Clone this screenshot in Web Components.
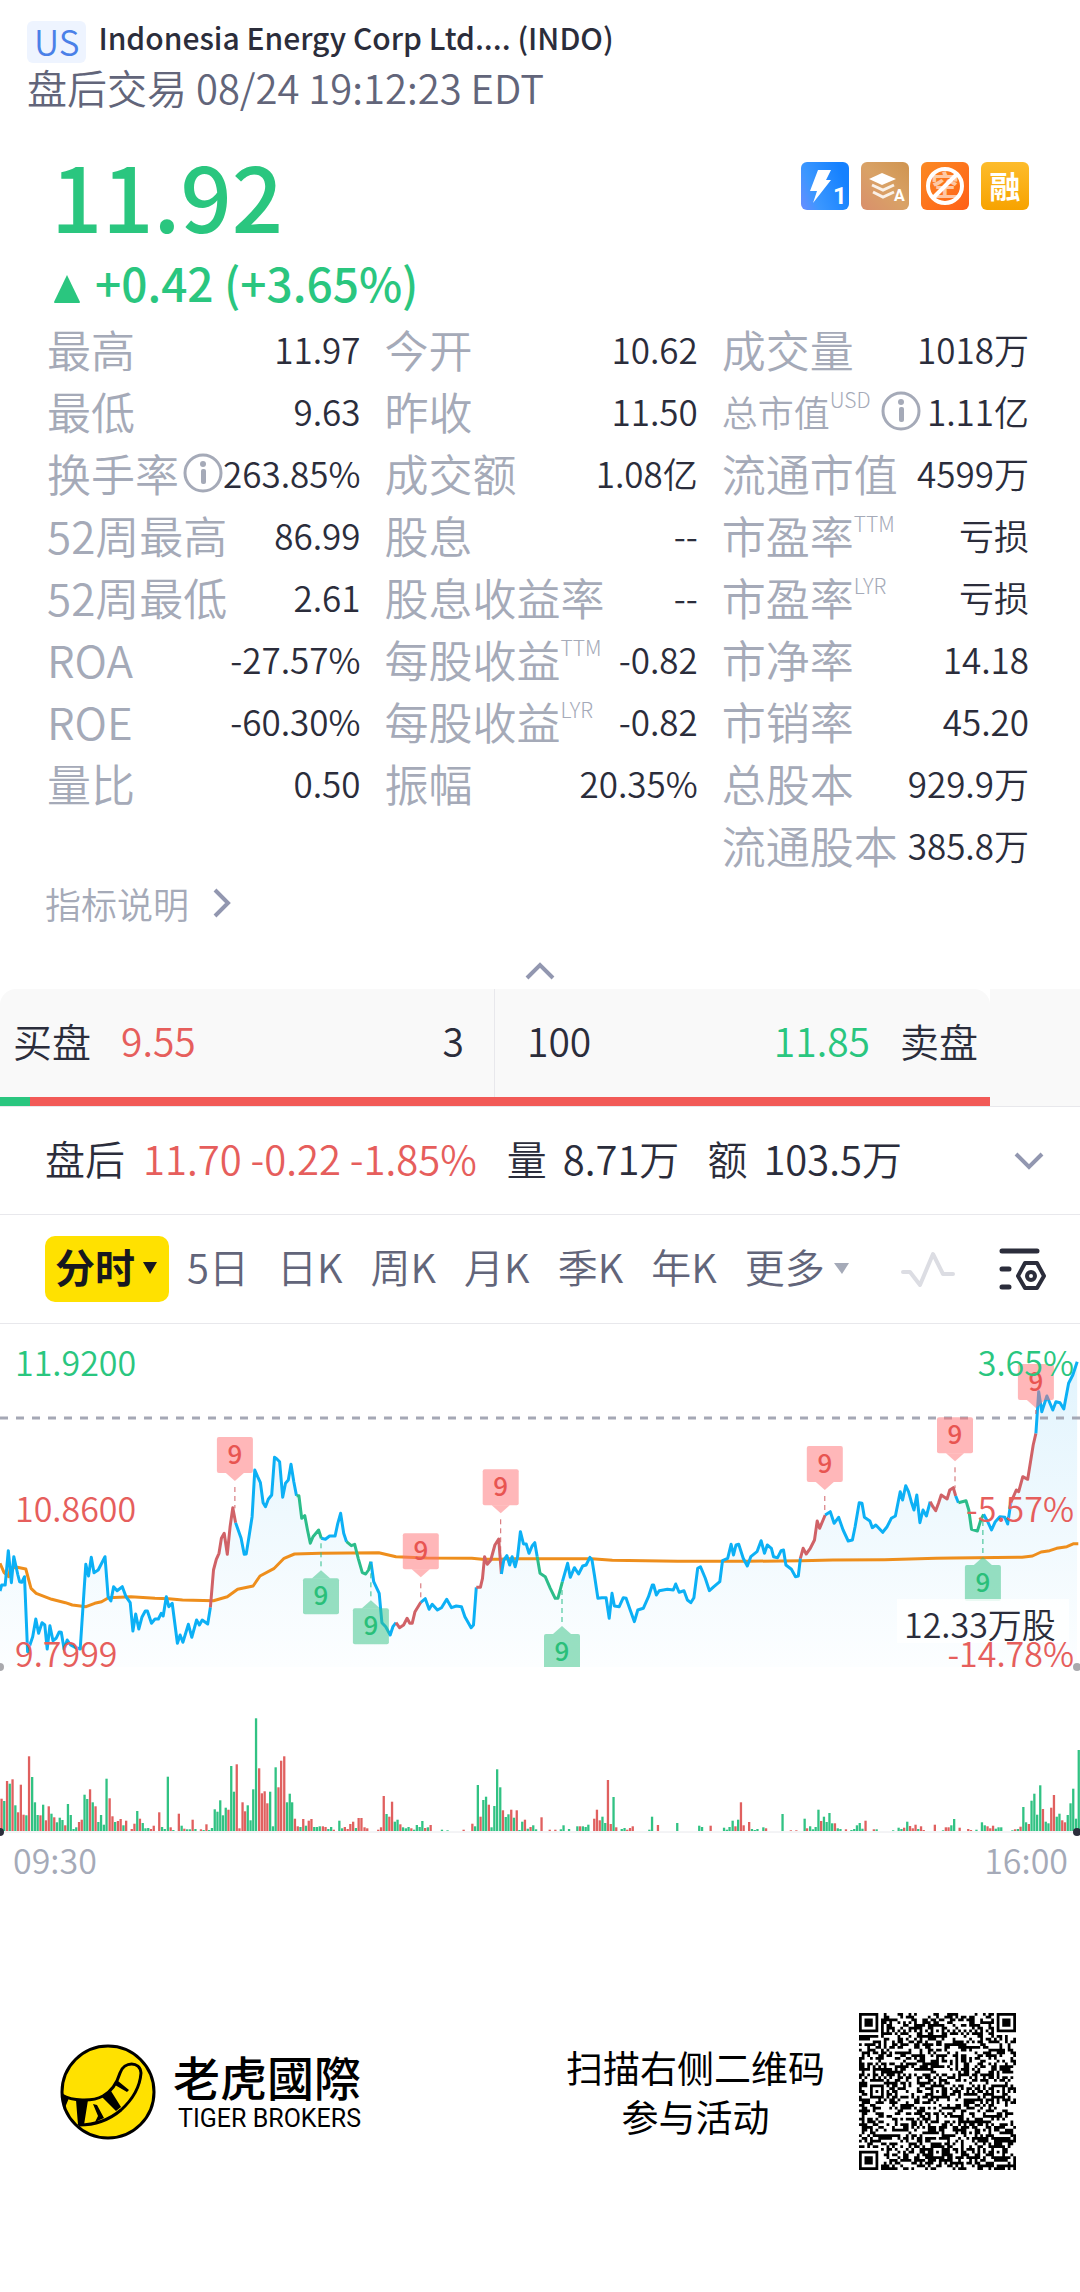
<!DOCTYPE html>
<html lang="zh-CN">
<head>
<meta charset="utf-8">
<meta name="viewport" content="width=device-width, initial-scale=1">
<title>Indonesia Energy Corp Ltd. (INDO)</title>
<style>
    :root {
        --up: #2ac67f;
        --down: #e65e5c;
        --ink: #2b2d3b;
        --muted: #a5aab8;
        --slate: #62657a;
        --line: #e8e8ec;
    }
    body {
        margin: 0;
        background: #fff;
        color: var(--ink);
        font-family: "Noto Sans CJK SC", "Noto Sans", sans-serif;
        font-size: 40px;
        font-weight: 350;
        line-height: 48px;
    }
</style>
</head>
<body>
<quote-header market="US">
    <span slot="name">Indonesia Energy Corp Ltd.... (INDO)</span>
    <span slot="time">盘后交易 08/24 19:12:23 EDT</span>
</quote-header>
<price-panel>
    <span slot="price">11.92</span>
    <span slot="change">+0.42 (+3.65%)</span>
</price-panel>
<stat-grid></stat-grid>
<order-book></order-book>
<after-hours></after-hours>
<chart-tabs></chart-tabs>
<intraday-chart></intraday-chart>
<brand-footer>
    <span slot="line1">扫描右侧二维码</span>
    <span slot="line2">参与活动</span>
</brand-footer>

<script>
class QuoteHeader extends HTMLElement {
    connectedCallback() {
        this.attachShadow({ mode: 'open' });
        this.shadowRoot.innerHTML = `
            <style>
                :host { display: block; padding: 21px 27px 0; }
                .top { display: flex; align-items: flex-start; gap: 12px; }
                .market {
                    box-sizing: border-box;
                    height: 42px;
                    padding: 0 7px;
                    border-radius: 6px;
                    background: #eef4ff;
                    color: #4a80e8;
                    font-size: 35px;
                    line-height: 40px;
                }
                h1 { margin: 0; font-size: 30px; font-weight: 500; line-height: 32px; }
                .time { margin: 0; color: var(--slate); }
            </style>
            <div class="top">
                <span class="market">${this.getAttribute('market')}</span>
                <h1><slot name="name"></slot></h1>
            </div>
            <p class="time"><slot name="time"></slot></p>
        `;
    }
}
customElements.define('quote-header', QuoteHeader);

class PricePanel extends HTMLElement {
    connectedCallback() {
        this.attachShadow({ mode: 'open' });
        this.shadowRoot.innerHTML = `
            <style>
                :host {
                    display: flex;
                    justify-content: space-between;
                    align-items: flex-start;
                    padding: 35px 51px 6px;
                    color: var(--up);
                    font-weight: 500;
                }
                .price { font-size: 90px; line-height: 96px; margin-bottom: 10px; }
                .change { display: flex; align-items: center; gap: 15px; font-size: 46px; line-height: 60px; }
                .arrow { width: 26px; height: 28px; margin-top: 14px; margin-left: 3px; }
                .tags { display: flex; gap: 12px; padding-top: 16px; }
                .tags svg { width: 48px; height: 48px; display: block; }
                text { font-weight: 700; fill: #fff; }
            </style>
            <div>
                <div class="price"><slot name="price"></slot></div>
                <div class="change">
                    <svg class="arrow" viewBox="0 0 26 28"><path d="M13 0L26 27Q26 28 25 28H1Q0 28 0 27Z" fill="#2ac67f"/></svg>
                    <slot name="change"></slot>
                </div>
            </div>
            <div class="tags">
                <svg viewBox="0 0 48 48">
                    <defs><linearGradient id="a" x1="0" y1="1" x2="1" y2="0.6"><stop offset="0" stop-color="#6b8cff"/><stop offset=".35" stop-color="#3b97ff"/><stop offset="1" stop-color="#1581ff"/></linearGradient></defs>
                    <rect width="48" height="48" rx="6" fill="url(#a)"/>
                    <path d="M17 8H30L25 18H30L12 41L16 29H9Z" fill="#fff"/>
                    <text x="32" y="42" font-size="24" font-family="Roboto, sans-serif">1</text>
                </svg>
                <svg viewBox="0 0 48 48">
                    <defs><linearGradient id="b" x1="0" y1="1" x2="1" y2="0"><stop offset="0" stop-color="#d98f6c"/><stop offset=".5" stop-color="#d9a266"/><stop offset="1" stop-color="#cf9450"/></linearGradient></defs>
                    <rect width="48" height="48" rx="6" fill="url(#b)"/>
                    <path d="M8 17L21 11L35 17L21 23Z" fill="#fff"/>
                    <path d="M11 23L22 28L33 23M12 30L22 35L33 30" fill="none" stroke="#fff" stroke-width="3" opacity=".85"/>
                    <text x="33" y="39" font-size="16" font-family="Roboto, sans-serif">A</text>
                </svg>
                <svg viewBox="0 0 48 48">
                    <defs><linearGradient id="c" x1="0" y1="0" x2="1" y2="1"><stop offset="0" stop-color="#fb8a23"/><stop offset="1" stop-color="#ff5f17"/></linearGradient></defs>
                    <rect width="48" height="48" rx="6" fill="url(#c)"/>
                    <text x="24" y="34" font-size="28" text-anchor="middle" opacity=".6">空</text>
                    <circle cx="24" cy="24" r="17" fill="none" stroke="#fff" stroke-width="4"/>
                    <path d="M12 36L36 12" stroke="#fff" stroke-width="4"/>
                </svg>
                <svg viewBox="0 0 48 48">
                    <defs><linearGradient id="d" x1="0" y1="0" x2="0" y2="1"><stop offset="0" stop-color="#fdbc2c"/><stop offset="1" stop-color="#f7a300"/></linearGradient></defs>
                    <rect width="48" height="48" rx="6" fill="url(#d)"/>
                    <text x="24" y="36" font-size="31" text-anchor="middle">融</text>
                </svg>
            </div>
        `;
    }
}
customElements.define('price-panel', PricePanel);

class StatItem extends HTMLElement {
    connectedCallback() {
        const sup = this.getAttribute('sup');
        const info = this.hasAttribute('info');
        this.attachShadow({ mode: 'open' });
        this.shadowRoot.innerHTML = `
            <style>
                :host { display: flex; justify-content: space-between; align-items: center; height: 62px; white-space: nowrap; }
                .label { display: flex; align-items: center; color: var(--muted); font-size: 44px; }
                :host([small]) .label { font-size: 36px; }
                sup { align-self: flex-start; font-size: 21px; line-height: 24px; font-weight: 300; }
                :host([small]) sup { margin-right: 6px; }
                button { display: block; padding: 0; border: 0; background: none; }
                button svg { display: block; width: 40px; height: 40px; margin-left: 4px; }
                .value { font-size: 35px; }
            </style>
            <span class="label"><slot name="label"></slot>${sup ? `<sup>${sup}</sup>` : ''}${info ? `
                <button aria-label="说明"><svg viewBox="0 0 40 40">
                    <circle cx="20" cy="20" r="18" fill="none" stroke="#a5aab8" stroke-width="3"/>
                    <circle cx="20" cy="11" r="3" fill="#a5aab8"/>
                    <rect x="18" y="16" width="5" height="15" rx="2" fill="#a5aab8"/>
                </svg></button>` : ''}</span>
            <span class="value"><slot></slot></span>
        `;
    }
}
customElements.define('stat-item', StatItem);

class StatGrid extends HTMLElement {
    connectedCallback() {
        // label, value, superscript, extra attributes
        const columns = [
            [['最高', '11.97'], ['最低', '9.63'], ['换手率', '263.85%', '', 'info'], ['52周最高', '86.99'],
             ['52周最低', '2.61'], ['ROA', '-27.57%'], ['ROE', '-60.30%'], ['量比', '0.50']],
            [['今开', '10.62'], ['昨收', '11.50'], ['成交额', '1.08亿'], ['股息', '--'],
             ['股息收益率', '--'], ['每股收益', '-0.82', 'TTM'], ['每股收益', '-0.82', 'LYR'], ['振幅', '20.35%']],
            [['成交量', '1018万'], ['总市值', '1.11亿', 'USD', 'info small'], ['流通市值', '4599万'], ['市盈率', '亏损', 'TTM'],
             ['市盈率', '亏损', 'LYR'], ['市净率', '14.18'], ['市销率', '45.20'], ['总股本', '929.9万'], ['流通股本', '385.8万']],
        ];
        const item = ([label, value, sup = '', extra = '']) =>
            `<stat-item sup="${sup}" ${extra}><span slot="label">${label}</span>${value}</stat-item>`;
        this.attachShadow({ mode: 'open' });
        this.shadowRoot.innerHTML = `
            <style>
                :host { display: block; }
                .grid { display: grid; grid-template-columns: 313fr 313fr 307fr; gap: 24px; padding: 0 51px 0 47px; }
                a {
                    display: flex;
                    align-items: center;
                    gap: 24px;
                    width: max-content;
                    height: 54px;
                    margin: 0 0 23px 45px;
                    color: var(--muted);
                    font-size: 36px;
                    text-decoration: none;
                }
                a svg { width: 18px; height: 30px; }
                .fold { display: block; height: 36px; margin: 0 auto; padding: 0; border: 0; background: none; }
                .fold svg { display: block; width: 30px; height: 18px; }
                path { fill: none; stroke: #9297b0; stroke-width: 4; }
            </style>
            <div class="grid">${columns.map(col => `<div>${col.map(item).join('')}</div>`).join('')}</div>
            <a href="#help">指标说明<svg viewBox="0 0 18 30"><path d="M2 2L15 15L2 28"/></svg></a>
            <button class="fold" aria-label="收起"><svg viewBox="0 0 30 18"><path d="M2 16L15 3L28 16"/></svg></button>
        `;
    }
}
customElements.define('stat-grid', StatGrid);

class OrderBook extends HTMLElement {
    connectedCallback() {
        this.attachShadow({ mode: 'open' });
        this.shadowRoot.innerHTML = `
            <style>
                :host { display: flex; border-bottom: 1px solid var(--line); background: #fff; font-size: 39px; }
                .book { flex: 11; }
                .rest { flex: 1; background: #f9f9f9; }
                .sides { display: flex; height: 108px; border-radius: 16px 16px 0 0; background: #f9f9f9; }
                .side { flex: 1; display: flex; align-items: center; gap: 30px; }
                .buy { padding: 0 30px 6px 13px; border-right: 1px solid var(--line); }
                .sell { padding: 0 12px 6px 32px; }
                .push { margin-left: auto; }
                .bid { color: var(--down); }
                .ask { color: var(--up); }
                .ratio { display: flex; height: 9px; background: #f25a57; }
                .ratio i { width: 3%; background: var(--up); }
            </style>
            <div class="book">
                <div class="sides">
                    <div class="side buy"><span>买盘</span><span class="bid">9.55</span><span class="push">3</span></div>
                    <div class="side sell"><span>100</span><span class="ask push">11.85</span><span>卖盘</span></div>
                </div>
                <div class="ratio"><i></i></div>
            </div>
            <div class="rest"></div>
        `;
    }
}
customElements.define('order-book', OrderBook);

class AfterHours extends HTMLElement {
    connectedCallback() {
        this.attachShadow({ mode: 'open' });
        this.shadowRoot.innerHTML = `
            <style>
                :host {
                    box-sizing: border-box;
                    display: flex;
                    align-items: center;
                    height: 108px;
                    padding: 0 36px 6px 45px;
                    border-bottom: 1px solid var(--line);
                    white-space: nowrap;
                }
                .change { margin: 0 30px 0 18px; color: var(--down); }
                .amount { display: flex; gap: 16px; margin-right: 28px; }
                button { margin-left: auto; padding: 6px 0 0; border: 0; background: none; }
                svg { display: block; width: 30px; height: 18px; }
            </style>
            <span>盘后</span>
            <span class="change">11.70 -0.22 -1.85%</span>
            <span class="amount"><span>量</span><span>8.71万</span></span>
            <span class="amount"><span>额</span><span>103.5万</span></span>
            <button aria-label="展开"><svg viewBox="0 0 30 18"><path d="M2 2L15 15L28 2" fill="none" stroke="#9297b0" stroke-width="4"/></svg></button>
        `;
    }
}
customElements.define('after-hours', AfterHours);

class ChartTabs extends HTMLElement {
    connectedCallback() {
        const tabs = ['5日', '日K', '周K', '月K', '季K', '年K'];
        this.attachShadow({ mode: 'open' });
        this.shadowRoot.innerHTML = `
            <style>
                :host {
                    display: flex;
                    align-items: center;
                    height: 108px;
                    padding: 0 33px 0 45px;
                    border-bottom: 1px solid var(--line);
                }
                button {
                    display: flex;
                    align-items: center;
                    padding: 0;
                    border: 0;
                    background: none;
                    color: var(--slate);
                    font: inherit;
                    white-space: nowrap;
                }
                nav { display: flex; gap: 28px; margin-left: 18px; padding-bottom: 6px; }
                .active {
                    box-sizing: border-box;
                    gap: 7px;
                    height: 66px;
                    padding: 0 11px 6px 10px;
                    border-radius: 10px;
                    background: #ffe100;
                    color: #17181f;
                    font-weight: 700;
                }
                .active svg, .more svg { width: 16px; height: 12px; padding-top: 4px; }
                .more { gap: 9px; }
                .pulse { margin-left: auto; }
                .pulse svg { width: 54px; height: 40px; }
                .setup { margin-left: 44px; }
                .setup svg { width: 48px; height: 44px; }
            </style>
            <button class="active">分时<svg viewBox="0 0 16 12"><path d="M1 0H15L8 12Z" fill="#17181f"/></svg></button>
            <nav>
                ${tabs.map(t => `<button>${t}</button>`).join('')}
                <button class="more">更多<svg viewBox="0 0 16 12"><path d="M0 1H15L8 12Z" fill="#a5aab8"/></svg></button>
            </nav>
            <button class="pulse" aria-label="走势"><svg viewBox="0 0 54 40">
                <path d="M2 23H9L19 36L32 5L42 25H52" fill="none" stroke="#dcdde3" stroke-width="4" stroke-linejoin="round" stroke-linecap="round"/>
            </svg></button>
            <button class="setup" aria-label="设置"><svg viewBox="0 0 48 44" fill="none" stroke="#2b2d3b" stroke-width="5" stroke-linecap="round">
                <path d="M3 4H38M3 22H10M3 40H10"/>
                <path d="M26 16H38L45 29L38 41H26L19 29Z" stroke-width="4" stroke-linejoin="round"/>
                <circle cx="32" cy="29" r="4" stroke-width="4"/>
            </svg></button>
        `;
    }
}
customElements.define('chart-tabs', ChartTabs);

// Each half of the session is plotted on a grid 1568 units wide, three units per pixel high.
const HALF = 1568;
const px = x => (x * 540 / HALF).toFixed(1);
const py = y => (y / 3 + 6).toFixed(1);
const shift = s => s.split(' ').map(p => {
    const [x, y] = p.split(',');
    return (+x + HALF) + ',' + y;
}).join(' ');
const toPoints = s => s.split(' ').map(p => {
    const [x, y] = p.split(',');
    return px(+x) + ',' + py(+y);
});

const PRICE = [
    ['blue', '0,783 5,765 15,765 24,662 33,758 40,680 52,735 57,755 63,757 71,740 80,965 95,920 104,867 112,910 122,878 130,885 137,957 145,887 154,932 163,925 172,906 178,907 186,958 195,930 205,945 218,952 233,957 249,703 257,738 265,682 273,728 285,720 305,680 314,800 322,813 330,770 340,782 355,770 366,800 378,818 386,903 394,852 403,897 412,862 422,843 428,843 440,880 450,867 460,867 468,850 474,858 483,800 490,830 500,820 515,940 523,915 531,937 547,883 557,922 571,870 579,885 587,870 603,882 611,832'],
    ['red', '620,720 628,688 636,670 643,625 651,610 660,673 668,590 676,533 684,578'],
    ['blue', '700,625 709,673 715,672 723,620 732,560 740,420 748,440 756,458 764,518 771,530 779,508 789,495 797,382 804,387 812,395 821,502 829,460 837,450 845,403 853,455 861,497'],
    ['green', '868,497 876,565 885,557 893,600 901,640 909,620 925,600 933,625'],
    ['blue', '945,628 957,618 973,618 981,580 989,550 998,610 1006,635'],
    ['green', '1020,647 1030,643 1040,685 1052,728 1062,732 1070,720 1077,695'],
    ['blue', '1085,755 1101,790 1109,878 1120,890 1133,915 1141,890 1150,878'],
    ['red', '1160,893 1172,885 1182,865 1190,880 1197,880 1205,845 1222,817'],
    ['blue', '1235,806 1246,838 1255,823 1270,840 1282,833 1297,808 1311,833 1325,828 1340,830 1350,860 1368,893 1375,885 1383,772'],
    ['red', '1395,772 1401,745 1407,680 1415,703 1425,690 1437,645 1448,627 1456,732'],
    ['blue', '1463,690 1472,677 1480,705 1487,680 1496,710 1503,680 1511,605 1520,642 1528,642 1536,670 1545,648 1553,638 1560,680'],
    ['green', shift('0,730 15,740 30,775 44,805 52,805 65,755')],
    ['blue', shift('80,700 88,742 100,713 112,732 124,708 134,705 145,682 151,690 158,735 168,805 180,803 192,803 201,865 209,790 216,828 230,830 242,803 250,805 262,840 274,875 284,840 300,835 315,800 326,765 330,765 338,795 346,782 370,778 387,780 394,762 404,787 418,782 428,810 438,818 447,803 458,715 466,710 480,745 492,782 505,770 522,755 530,692 545,685 555,643 562,675 569,645 577,643 590,685 602,708 612,680 630,665 642,632 652,670 660,645 672,655 678,680 690,683 700,662 707,660 714,705 730,718 742,740 750,738 756,685')],
    ['red', shift('764,655 773,672 785,655 797,630 805,573 812,595 828,555')],
    ['blue', shift('843,545 854,580 867,562 880,600 895,633 907,630 915,590 927,518 935,520 942,562 958,573 965,593 975,585 995,607 1008,590 1020,565 1032,558 1046,485 1053,510 1062,467 1070,485 1078,515 1086,540 1094,495 1103,578 1112,540 1122,558 1133,515')],
    ['red', shift('1141,530 1149,542 1157,520 1165,495 1182,507 1190,480 1200,473 1207,498')],
    ['blue', shift('1215,518')],
    ['green', shift('1237,512 1245,540 1253,598 1270,603 1280,570 1288,553')],
    ['blue', shift('1300,575 1311,600 1322,575 1335,560 1350,562 1358,582 1367,518')],
    ['red', shift('1383,480 1390,485 1402,440 1416,448 1425,390 1432,345 1440,310')],
    ['blue', shift('1448,185 1457,245 1472,198 1489,240 1498,215 1510,218 1521,237 1535,160 1547,135 1560,95')],
];
const AVERAGE = '0,700 12,728 25,740 30,715 50,712 75,717 90,775 105,790 150,808 190,818 210,825 250,830 275,820 295,815 315,803 380,800 450,805 490,806 530,810 620,812 660,800 690,778 735,768 755,738 795,716 825,685 855,672 930,670 1100,668 1150,680 1240,684 1370,685 1400,688 1450,688 1480,686 '
    + shift('0,686 150,686 210,691 400,694 600,694 760,692 850,690 1000,689 1150,685 1200,684 1400,682 1430,678 1455,666 1480,662 1500,655 1530,650 1550,641 1563,641');

// centre, top of the box, y of the price that it points at
const SELL_MARKS = [[682, 321, 535], [1222, 610, 815], [1454, 418, 680], [HALF + 827, 348, 550], [HALF + 1205, 262, 475], [HALF + 1440, 102, 240]];
const BUY_MARKS = [[932, 745, 625], [1077, 835, 700], [HALF + 64, 912, 755], [HALF + 1286, 705, 555]];

// x,height pairs; a negative height is a falling minute
const VOLUME = '4,-97 12,90 20,-150 28,142 36,-155 44,77 52,-56 60,-139 68,-49 76,47 84,-224 93,162 101,86 109,48 117,-47 125,79 133,-32 141,-74 149,52 157,-41 165,26 173,40 181,33 189,-17 197,81 205,48 213,6 221,11 229,-27 237,-34 245,109 253,96 261,-125 269,86 277,-74 285,27 293,48 301,19 309,157 318,-98 326,-44 334,27 342,-30 350,-36 358,17 366,-31 382,-6 390,-22 398,60 406,-37 414,24 422,8 430,9 438,-6 446,-16 462,-56 470,12 478,6 487,163 495,-11 503,3 519,-52 527,16 535,-7 543,5 551,5 559,-34 567,6 583,-5 591,3 599,-20 607,3 615,9 623,65 631,58 639,92 647,47 655,70 663,-64 671,195 679,118 687,-200 695,-8 704,-86 711,-59 719,77 727,32 735,125 743,338 752,-188 760,-113 768,-119 776,-83 784,118 792,14 800,191 808,-131 816,-211 825,-224 833,86 841,112 848,86 856,-37 864,-14 872,12 880,-36 888,16 896,-31 904,-36 912,12 920,12 928,14 937,-14 945,-12 953,6 961,12 969,-4 985,31 993,8 1001,-12 1009,-6 1017,-21 1025,-28 1033,9 1041,-39 1049,-39 1058,-11 1066,-8 1098,-4 1106,-11 1114,-105 1122,51 1130,-43 1138,-88 1146,28 1154,34 1162,-20 1170,11 1178,8 1186,12 1194,-8 1202,4 1210,18 1218,12 1226,30 1234,-9 1242,11 1250,-18 1283,4 1299,2 1346,-4 1371,-22 1379,14 1387,138 1395,-43 1403,93 1411,103 1419,-79 1427,11 1435,75 1443,185 1452,131 1460,-62 1468,42 1476,50 1484,-64 1492,40 1500,-62 1508,3 1516,28 1524,-34 1532,7 1540,-12 1548,17 1556,5 '
    + shift('4,-41 28,-4 44,-4 60,5 68,17 84,6 108,14 116,-14 124,14 132,12 140,19 157,-37 165,-64 173,-32 181,43 189,24 197,-153 205,-21 213,102 221,-11 237,6 245,9 253,-4 261,-9 269,-14 317,4 325,43 342,-18 398,24 462,16 470,12 495,-16 534,10 542,4 550,12 559,31 567,-14 575,34 583,-86 591,-17 607,-27 615,6 623,3 631,6 648,11 656,-8 704,51 728,-2 744,-2 768,37 775,-8 784,14 792,5 800,12 808,64 816,-30 824,43 832,27 840,54 848,23 856,-23 864,8 872,6 888,-5 904,3 912,6 920,17 928,24 936,7 945,-31 969,-5 977,5 1025,2 1041,10 1049,6 1057,-10 1066,28 1074,-15 1082,-8 1090,-19 1098,6 1106,-14 1114,-3 1146,-19 1170,2 1178,-11 1186,-11 1194,17 1202,36 1218,-10 1243,-6 1251,-3 1267,4 1283,26 1291,17 1299,-14 1307,-8 1315,-16 1323,7 1331,11 1339,11 1371,2 1379,-5 1387,6 1395,-13 1403,72 1411,26 1419,-21 1427,91 1435,112 1443,49 1452,137 1460,-66 1468,28 1476,23 1484,-70 1492,-108 1500,43 1508,52 1516,-32 1524,-26 1532,48 1540,83 1548,127 1556,37 1564,243');

class IntradayChart extends HTMLElement {
    priceLines() {
        let last = null;
        return PRICE.map(([color, s]) => {
            const pts = toPoints(s);
            if (last) pts.unshift(last);
            last = pts[pts.length - 1];
            return `<polyline class="${color}" points="${pts.join(' ')}"/>`;
        }).join('');
    }
    mark([x, top, y], kind) {
        const cx = +px(x), t = +py(top), to = +py(y);
        const sell = kind === 'sell';
        const tip = sell
            ? `M${cx - 9} ${t + 36}L${cx} ${t + 44}L${cx + 9} ${t + 36}Z`
            : `M${cx - 9} ${t}L${cx} ${t - 8}L${cx + 9} ${t}Z`;
        const bottom = sell ? t + 50 : t - 12;
        return `<g class="${kind}">
            <path class="leader" d="M${cx} ${bottom}V${to}"/>
            <rect x="${cx - 18}" y="${t}" width="36" height="36" rx="2"/><path d="${tip}"/>
            <text x="${cx}" y="${t + 27}" text-anchor="middle">9</text>
        </g>`;
    }
    bars() {
        return VOLUME.split(' ').map(p => {
            const [x, h] = p.split(',').map(Number);
            const size = Math.abs(h) / 3;
            return `<rect x="${(px(x) - 1).toFixed(1)}" y="${(507 - size).toFixed(1)}" width="2.3" height="${size.toFixed(1)}" fill="${h < 0 ? '#e0605f' : '#31c283'}"/>`;
        }).join('');
    }
    connectedCallback() {
        const all = PRICE.map(([, s]) => toPoints(s).join(' ')).join(' ');
        this.attachShadow({ mode: 'open' });
        this.shadowRoot.innerHTML = `
            <style>
                :host { display: block; }
                svg { display: block; width: 100%; height: auto; }
                polyline { fill: none; stroke-width: 3; stroke-linejoin: round; }
                .blue { stroke: #0cb0f5; }
                .red { stroke: #d06267; }
                .green { stroke: #2cbd8a; }
                .avg { stroke: #ee8e1c; }
                .leader { fill: none; stroke-width: 1; stroke-dasharray: 5 4; }
                .sell rect, .sell path:not(.leader) { fill: #ff7073; fill-opacity: .5; }
                .buy rect, .buy path:not(.leader) { fill: #33c283; fill-opacity: .5; }
                .sell .leader { stroke: #d06267; }
                .buy .leader { stroke: #2cbd8a; }
                .sell text { fill: #e85551; }
                .buy text { fill: #2abf79; }
                g text { font-size: 26px; font-weight: 500; }
                .axis { font-size: 34px; }
                .up { fill: var(--up); }
                .down { fill: var(--down); }
                .time { fill: var(--muted); }
                .vol { fill: var(--ink); font-size: 34px; }
            </style>
            <svg viewBox="0 0 1080 560" role="img" aria-label="分时走势">
                <defs>
                    <linearGradient id="fill" x1="0" y1="0" x2="0" y2="1">
                        <stop offset="0" stop-color="#e2f4fd"/>
                        <stop offset="1" stop-color="#fcfeff"/>
                    </linearGradient>
                    <clipPath id="plot"><rect width="1080" height="343"/></clipPath>
                </defs>
                <polygon points="0,343 ${all} 1077,343" fill="url(#fill)"/>
                <path d="M0 94H1080" stroke="#a5a8b5" stroke-width="3" stroke-dasharray="8 8"/>
                <polyline class="avg" points="${toPoints(AVERAGE).join(' ')}"/>
                ${this.priceLines()}
                <g clip-path="url(#plot)">
                    ${SELL_MARKS.map(m => this.mark(m, 'sell')).join('')}
                    ${BUY_MARKS.map(m => this.mark(m, 'buy')).join('')}
                </g>
                <rect x="897" y="275" width="172" height="44" fill="#fff" opacity=".8"/>
                <text class="vol" x="904" y="314">12.33万股</text>
                <text class="axis up" x="15" y="52">11.9200</text>
                <text class="axis down" x="15" y="198">10.8600</text>
                <text class="axis down" x="15" y="343">9.7999</text>
                <text class="axis up" x="1074" y="52" text-anchor="end">3.65%</text>
                <text class="axis down" x="1074" y="198" text-anchor="end">-5.57%</text>
                <text class="axis down" x="1074" y="343" text-anchor="end">-14.78%</text>
                <circle cx="0" cy="343" r="4" fill="#a9a9ad"/>
                <circle cx="1077" cy="343" r="4" fill="#a9a9ad"/>
                <path d="M0 508H1080" stroke="#e8e8ec"/>
                ${this.bars()}
                <circle cx="0" cy="508" r="4" fill="#2b2d3b"/>
                <circle cx="1077" cy="508" r="4" fill="#2b2d3b"/>
                <text class="axis time" x="13" y="550">09:30</text>
                <text class="axis time" x="1068" y="550" text-anchor="end">16:00</text>
            </svg>
        `;
    }
}
customElements.define('intraday-chart', IntradayChart);

class QrCode extends HTMLElement {
    connectedCallback() {
        const n = 57;
        const grid = [];
        let seed = 20230824;
        for (let y = 0; y < n; y++) {
            grid.push([]);
            for (let x = 0; x < n; x++) {
                seed = (seed * 48271) % 2147483647;
                grid[y].push(seed / 2147483647 > 0.5);
            }
        }
        for (let i = 8; i < n - 8; i++) grid[6][i] = grid[i][6] = i % 2 === 0;
        const square = (cx, cy, r, dark) => {
            for (let y = -r; y <= r; y++) {
                for (let x = -r; x <= r; x++) {
                    if (cx + x < 0 || cy + y < 0 || cx + x >= n || cy + y >= n) continue;
                    grid[cy + y][cx + x] = dark(Math.max(Math.abs(x), Math.abs(y)));
                }
            }
        };
        [[3, 3], [n - 4, 3], [3, n - 4]].forEach(([x, y]) => square(x, y, 4, d => d < 2 || d === 3));
        [[28, 6], [6, 28], [28, 28], [50, 28], [28, 50], [50, 50]].forEach(([x, y]) => square(x, y, 2, d => d !== 1));
        let d = '';
        grid.forEach((row, y) => row.forEach((on, x) => { if (on) d += `M${x} ${y}h1v1h-1z`; }));
        this.attachShadow({ mode: 'open' });
        this.shadowRoot.innerHTML = `
            <style>
                :host { display: block; }
                svg { display: block; width: 157px; height: 157px; }
            </style>
            <svg viewBox="0 0 ${n} ${n}" role="img" aria-label="二维码"><path d="${d}"/></svg>
        `;
    }
}
customElements.define('qr-code', QrCode);

class BrandFooter extends HTMLElement {
    connectedCallback() {
        this.attachShadow({ mode: 'open' });
        this.shadowRoot.innerHTML = `
            <style>
                :host {
                    display: flex;
                    align-items: center;
                    justify-content: space-between;
                    padding: 129px 64px 120px 60px;
                    color: #000;
                    font-weight: 400;
                }
                .brand, .scan { display: flex; align-items: center; }
                .brand { gap: 17px; }
                .brand svg { width: 96px; height: 96px; }
                .names { display: flex; flex-direction: column; align-items: flex-end; gap: 3px; }
                .zh { font-size: 47px; font-weight: 500; line-height: 52px; }
                .en { font-family: Roboto, sans-serif; font-size: 25px; line-height: 28px; }
                .scan { gap: 34px; }
                .text { font-size: 37px; text-align: center; }
                .text div { line-height: 49px; }
            </style>
            <div class="brand">
                <svg viewBox="0 0 96 96">
                    <circle cx="48" cy="48" r="46" fill="#ffe100" stroke="#000" stroke-width="3"/>
                    <path d="M2 51C12 57 32 58 43 52C52 47 57 39 60 29C64 17 80 17 81 29C80 43 72 56 61 66C48 77 34 81 19 81" fill="none" stroke="#000" stroke-width="3"/>
                    <path d="M1 50L9 54L4 66ZM16 56H28L24 81H18ZM33 60L37 61L44 74L35 78L38 72ZM42 53L51 47L61 63L56 67ZM55 41L58 37L69 46L67 48Z"/>
                </svg>
                <div class="names"><span class="zh">老虎國際</span><span class="en">TIGER BROKERS</span></div>
            </div>
            <div class="scan">
                <div class="text"><div><slot name="line1"></slot></div><div><slot name="line2"></slot></div></div>
                <qr-code></qr-code>
            </div>
        `;
    }
}
customElements.define('brand-footer', BrandFooter);
</script>
</body>
</html>
